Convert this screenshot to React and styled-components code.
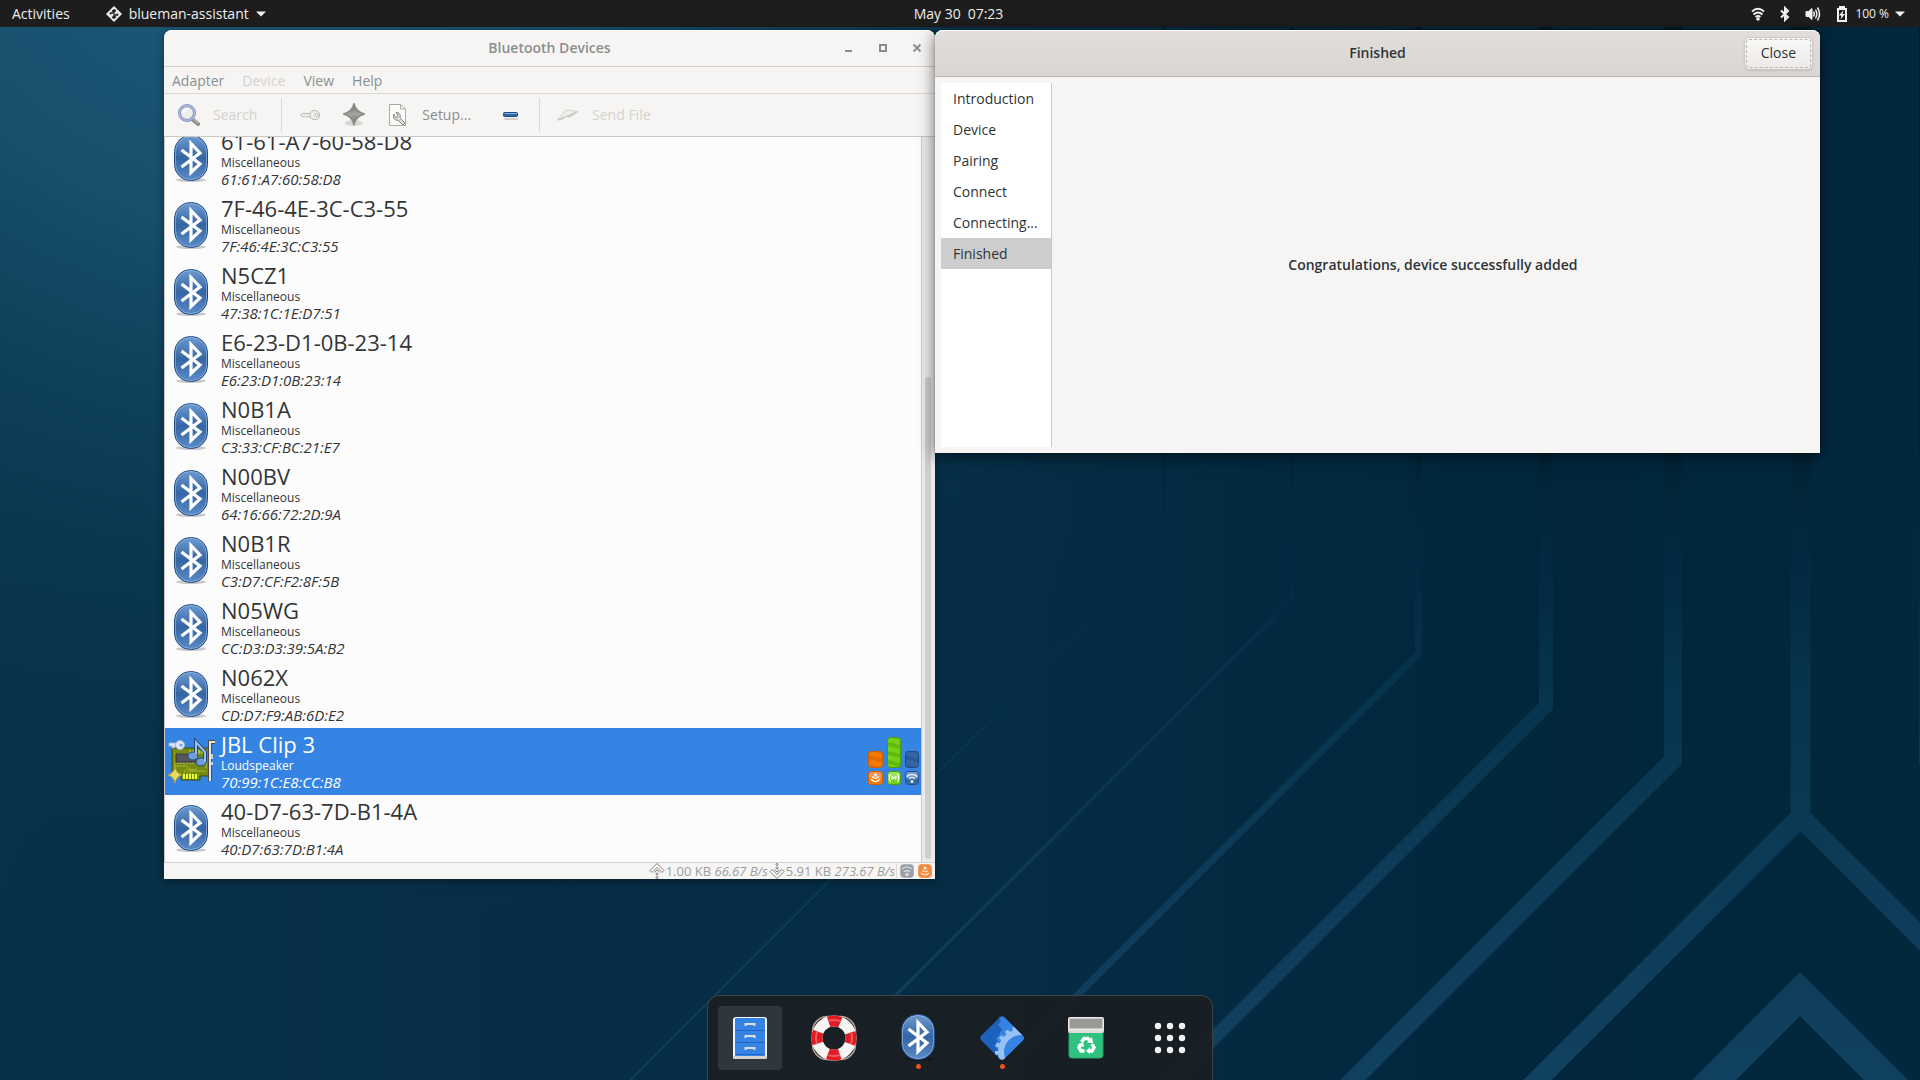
import React from 'react';
import styled, { createGlobalStyle } from 'styled-components';

const devices = [
  { name: '61-61-A7-60-58-D8', kind: 'Miscellaneous', address: '61:61:A7:60:58:D8' },
  { name: '7F-46-4E-3C-C3-55', kind: 'Miscellaneous', address: '7F:46:4E:3C:C3:55' },
  { name: 'N5CZ1', kind: 'Miscellaneous', address: '47:38:1C:1E:D7:51' },
  { name: 'E6-23-D1-0B-23-14', kind: 'Miscellaneous', address: 'E6:23:D1:0B:23:14' },
  { name: 'N0B1A', kind: 'Miscellaneous', address: 'C3:33:CF:BC:21:E7' },
  { name: 'N00BV', kind: 'Miscellaneous', address: '64:16:66:72:2D:9A' },
  { name: 'N0B1R', kind: 'Miscellaneous', address: 'C3:D7:CF:F2:8F:5B' },
  { name: 'N05WG', kind: 'Miscellaneous', address: 'CC:D3:D3:39:5A:B2' },
  { name: 'N062X', kind: 'Miscellaneous', address: 'CD:D7:F9:AB:6D:E2' },
  { name: 'JBL Clip 3', kind: 'Loudspeaker', address: '70:99:1C:E8:CC:B8', selected: true },
  { name: '40-D7-63-7D-B1-4A', kind: 'Miscellaneous', address: '40:D7:63:7D:B1:4A' },
];

const steps = ['Introduction', 'Device', 'Pairing', 'Connect', 'Connecting...', 'Finished'];

const Wallpaper = () => (
  <Backdrop viewBox="0 0 1920 1080" preserveAspectRatio="xMidYMid slice" aria-hidden="true">
    <defs>
      <linearGradient id="trace" gradientUnits="userSpaceOnUse" x1="0" y1="0" x2="0" y2="1080">
        <stop offset="0" stopColor="#03161f" stopOpacity="0.8" />
        <stop offset="0.42" stopColor="#03202f" stopOpacity="0.65" />
        <stop offset="0.52" stopColor="#022c45" stopOpacity="0.5" />
        <stop offset="0.62" stopColor="#06334c" />
        <stop offset="0.8" stopColor="#0b3b57" />
        <stop offset="1" stopColor="#114160" />
      </linearGradient>
      <radialGradient id="glow" gradientUnits="userSpaceOnUse" cx="260" cy="-160" r="1100">
        <stop offset="0" stopColor="#215f80" />
        <stop offset="0.35" stopColor="#1a5472" stopOpacity="0.85" />
        <stop offset="0.65" stopColor="#0d4059" stopOpacity="0.5" />
        <stop offset="1" stopColor="#07304a" stopOpacity="0" />
      </radialGradient>
      <linearGradient id="night" x1="0" y1="0" x2="1" y2="0">
        <stop offset="0" stopColor="#073049" />
        <stop offset="0.5" stopColor="#052d45" />
        <stop offset="0.82" stopColor="#01263c" />
        <stop offset="1" stopColor="#02283e" />
      </linearGradient>
      <linearGradient id="btFill" x1="0" y1="0" x2="0" y2="1">
        <stop offset="0" stopColor="#6e9bd0" />
        <stop offset="0.5" stopColor="#3465a4" />
        <stop offset="1" stopColor="#5c8cc6" />
      </linearGradient>
      <linearGradient id="starFill" x1="0" y1="0" x2="0" y2="1">
        <stop offset="0" stopColor="#6f6f6c" />
        <stop offset="0.5" stopColor="#a4a4a1" />
        <stop offset="1" stopColor="#70706e" />
      </linearGradient>
      <pattern id="stripeOrange" width="14" height="9" patternUnits="userSpaceOnUse" patternTransform="skewY(14)">
        <rect width="14" height="9" fill="#f57900" />
        <rect width="14" height="4" fill="#e06c00" />
      </pattern>
      <pattern id="stripeGreen" width="14" height="9" patternUnits="userSpaceOnUse" patternTransform="skewY(14)">
        <rect width="14" height="9" fill="#73d216" />
        <rect width="14" height="4" fill="#61b80e" />
      </pattern>
      <pattern id="stripeBlue" width="14" height="9" patternUnits="userSpaceOnUse" patternTransform="skewY(14)">
        <rect width="14" height="9" fill="#3465a4" />
        <rect width="14" height="4" fill="#2a5a9a" />
      </pattern>
    </defs>
    <rect width="1920" height="1080" fill="url(#night)" />
    <rect width="1920" height="1080" fill="url(#glow)" />
    <g fill="none" stroke="url(#trace)">
      <path d="M1163.500 0V547L630 1080.500" strokeWidth="1.500" />
      <path d="M1291 0V600L811 1080" strokeWidth="3" />
      <path d="M1418.500 0V654L992 1080.500" strokeWidth="7" />
      <path d="M1546 0V706L1172 1080" strokeWidth="14" />
      <path d="M1673 0V760L1343 1090" strokeWidth="18" />
      <path d="M1800.500 0V817L1530 1087.500M1800.500 817L1930 946.500" strokeWidth="20" />
      <path d="M1928 0V765" strokeWidth="18" />
      <path d="M1680 1114L1800 994L1930 1124" strokeWidth="31" />
    </g>
  </Backdrop>
);

const BluetoothBadge = () => (
  <svg width="34" height="48" viewBox="0 0 34 48">
    <ellipse cx="17" cy="45" rx="15" ry="2" fill="#000" opacity="0.2" />
    <rect x="0.500" y="0.500" width="33" height="45" rx="16" fill="url(#btFill)" stroke="#204a87" />
    <rect x="1.500" y="1.500" width="31" height="43" rx="15" fill="none" stroke="#9fbfe6" strokeOpacity="0.6" />
    <path d="M7.500 15L26 29L17 37.500V8.500L26 18L7.500 32" fill="none" stroke="#fff" strokeWidth="3.200" />
  </svg>
);

const SoundCard = () => (
  <svg width="48" height="48" viewBox="0 0 48 48">
    <path d="M5 10H42V38H33V42H14V38H5Z" fill="#758a12" stroke="#3f4f08" />
    <path d="M8 14V36H14M8 28H20L24 33H39M30 14H39V30" fill="none" stroke="#a5b52c" />
    <path d="M23 12V16M26 12V16M29 12V16M32 12V16M35 12V16" stroke="#d8e04a" />
    <path d="M17 36V41M20 36V41M23 36V41M26 36V41M29 36V41" stroke="#e8ff2a" strokeWidth="2" />
    <path d="M17 36Q17 31 22 31M20 36Q20 32 26 31M23 36Q23 32 30 31" fill="none" stroke="#a5b52c" />
    <path d="M11 15V26M14 15V26M17 15V26M20 15V26M23 15V26M26 15V26" stroke="#c8c8c4" />
    <rect x="9" y="16" width="20" height="8" fill="#55575a" stroke="#2e3436" />
    <path d="M48 4H43V43" fill="none" stroke="#4b4b49" strokeWidth="4" />
    <path d="M48 4H43V43" fill="none" stroke="#e8e4df" strokeWidth="2" />
    <path d="M45 16V21M45 24V27" stroke="#d3d0ca" strokeWidth="2" />
    <path d="M29 16V4L38 14V24" fill="none" stroke="#1f4a87" strokeWidth="4" />
    <ellipse cx="26" cy="18" rx="5" ry="4" fill="#6f9fdb" stroke="#1f4a87" />
    <ellipse cx="34" cy="24" rx="5" ry="4" fill="#6f9fdb" stroke="#1f4a87" />
    <path d="M29 16V4L38 14V24" fill="none" stroke="#9cc0ec" strokeWidth="2" />
    <path d="M2 5H10V9H7V10H5V8H2Z" fill="#dbe7f5" stroke="#9db8d6" />
    <circle cx="13" cy="7" r="4.500" fill="#dbe7f5" stroke="#9db8d6" />
    <circle cx="14" cy="7" r="1.500" fill="#6a9bd8" />
    <path d="M8 29Q9 35 15 37Q9 39 8 45Q7 39 1 37Q7 35 8 29Z" fill="#ead866" stroke="#b3a02e" />
  </svg>
);

const SignalBars = () => (
  <svg width="52" height="50" viewBox="0 0 52 50" fill="none">
    <rect x="0.500" y="14.500" width="14" height="16" rx="3" fill="url(#stripeOrange)" stroke="#ce5c00" />
    <rect x="19.500" y="0.500" width="13" height="30" rx="3" fill="url(#stripeGreen)" stroke="#4e9a06" />
    <rect x="37.500" y="14.500" width="13" height="16" rx="3" fill="url(#stripeBlue)" stroke="#204a87" />
    <rect x="0.500" y="34.500" width="14" height="13" rx="3" fill="#f8924a" stroke="#ce5c00" />
    <rect x="1" y="41" width="13" height="6" rx="2" fill="#f57900" />
    <rect x="19.500" y="34.500" width="13" height="13" rx="3" fill="#9be05c" stroke="#4e9a06" />
    <rect x="20" y="41" width="12" height="6" rx="2" fill="#73d216" />
    <rect x="37.500" y="34.500" width="13" height="13" rx="3" fill="#7c9fce" stroke="#204a87" />
    <rect x="38" y="41" width="12" height="6" rx="2" fill="#3465a4" />
    <g stroke="#fff" strokeWidth="1.200">
      <path d="M3 42Q7.500 47 12 42M4 39.500Q7.500 43 11 39.500" />
      <path d="M22.500 37Q20 41 22.500 45M29.500 37Q32 41 29.500 45M24.500 39Q23 41 24.500 43M27.500 39Q29 41 27.500 43" />
      <path d="M39 39.500Q44 35.500 49 39.500M41 42Q44 39.500 47 42" />
    </g>
    <circle cx="7.500" cy="38" r="1.500" fill="#fff" />
    <circle cx="26" cy="41" r="1" fill="#fff" />
    <circle cx="44" cy="44.500" r="1.500" fill="#fff" />
  </svg>
);

const SearchIcon = () => (
  <svg width="22" height="22" viewBox="0 0 22 22">
    <path d="M14 15L20 20" stroke="#8d8d8a" strokeWidth="4" strokeLinecap="round" />
    <path d="M15 15L20 19" stroke="#c9c9c6" strokeLinecap="round" />
    <circle cx="9" cy="9" r="7.500" fill="#eeeeec" stroke="#7f8fbc" strokeWidth="3" />
    <circle cx="9" cy="9" r="7.500" fill="none" stroke="#aebbe0" strokeWidth="1.500" />
    <path d="M5 9Q6 5 10 5" fill="none" stroke="#fff" strokeWidth="2" />
  </svg>
);

const KeyIcon = () => (
  <svg width="22" height="22" viewBox="0 0 22 22" fill="#eeeeec" stroke="#b9b9b5">
    <path d="M11 9.500H3L1.500 11.500L4 13L5.500 12L7 13.500L8.500 12L10 13H11.500" />
    <path d="M16 6.500C19 6.500 20.500 8.500 20.500 11S19 15.500 16 15.500S11 14 11 11S13 6.500 16 6.500Z" />
    <circle cx="17.500" cy="11" r="1.500" fill="#fff" />
  </svg>
);

const StarIcon = () => (
  <svg width="22" height="24" viewBox="0 0 22 24">
    <ellipse cx="11" cy="20" rx="9" ry="3" fill="#000" opacity="0.12" />
    <path
      d="M11 0.500Q12.500 8.500 21.500 11Q12.500 13.500 11 21.500Q9.500 13.500 0.500 11Q9.500 8.500 11 0.500Z"
      fill="url(#starFill)"
      stroke="#8b8b88"
      strokeWidth="1.500"
      strokeLinejoin="round"
    />
  </svg>
);

const SetupIcon = () => (
  <svg width="22" height="24" viewBox="0 0 22 24" fill="none">
    <path d="M2.500 1.500H13.500L18.500 6V22.500H2.500Z" fill="#fbfbfa" stroke="#a9aba7" />
    <path d="M13.500 1.500V6H18.500" stroke="#a9aba7" />
    <path d="M7 11C5.500 15 8 18 11 17L16 22L18 20L13 15C14 12 12 9 9 9.500L11 12L10.500 14L8.500 14.500Z" fill="#deded9" stroke="#858783" />
  </svg>
);

const MinusIcon = () => (
  <svg width="22" height="22" viewBox="0 0 22 22">
    <rect x="4" y="14" width="14" height="2" rx="1" fill="#000" opacity="0.15" />
    <rect x="3.500" y="8.500" width="14" height="4" rx="1" fill="#3465a4" stroke="#204a87" />
    <path d="M5 9.500H17" stroke="#8aaedb" />
  </svg>
);

const PlaneIcon = () => (
  <svg width="22" height="22" viewBox="0 0 22 22" strokeLinejoin="round">
    <path d="M0.500 16L9 6L21 7.500Z" fill="#efefed" stroke="#d0d0cd" />
    <path d="M0.500 16L21 7.500L13 13L9 12L7 14.500Z" fill="#cfcfcc" stroke="#cacac7" />
  </svg>
);

const TrafficIcon = ({ down }) => (
  <svg width="16" height="16" viewBox="0 0 16 16" fill="none" stroke="#7d7f7b">
    <g transform={down ? 'rotate(180 8 8)' : undefined}>
      <path d="M8 0.500L15 7.500L13 9.500L8 4.500L3 9.500L1 7.500Z" fill="#fafafa" />
      <path d="M5.500 9.500L8 7L10.500 9.500" />
      <circle cx="8" cy="11" r="1" />
      <circle cx="8" cy="14.500" r="1" />
    </g>
  </svg>
);

const StatusBadge = ({ sending }) => (
  <svg width="14" height="14" viewBox="0 0 14 14" fill="none">
    <rect x="0.500" y="0.500" width="13" height="13" rx="3" fill={sending ? '#f3893c' : '#9a9ea6'} stroke={sending ? '#ee9d60' : '#b0b3b9'} />
    {sending ? (
      <g>
        <path d="M3 9Q7 12.500 11 9M4 6.500Q7 9 10 6.500" stroke="#fde3cd" strokeWidth="1.200" />
        <circle cx="7" cy="4" r="1.500" fill="#fff" />
      </g>
    ) : (
      <g>
        <path d="M2 5Q7 1 12 5M4 8Q7 5 10 8" stroke="#dfe0e3" strokeWidth="1.200" />
        <circle cx="7" cy="10.500" r="1.500" fill="#e6e7e9" />
      </g>
    )}
  </svg>
);

const AppMark = () => (
  <svg width="16" height="16" viewBox="0 0 16 16">
    <path d="M8 0L16 8L8 16L0 8Z" fill="#eeeeec" />
    <path d="M4.500 8.500V7H8V5M6 5.500L8 4L10 5M11.500 7.500V9H8V11M10 10.500L8 12L6 11" fill="none" stroke="#1d1d1d" strokeWidth="1.500" />
  </svg>
);

const Caret = () => (
  <svg width="10" height="6" viewBox="0 0 10 6">
    <path d="M0 0.500H10L5 5.500Z" fill="#f2f2f2" />
  </svg>
);

const WifiIcon = () => (
  <svg width="14" height="16" viewBox="0 0 14 16" fill="none" stroke="#f2f2f2" strokeWidth="1.800">
    <path d="M1 5.500Q7 0 13 5.500M2.500 8.500Q7 4.500 11.500 8.500M4.500 11Q7 9 9.500 11" />
    <circle cx="7" cy="13" r="1.800" fill="#f2f2f2" stroke="none" />
  </svg>
);

const TrayBluetooth = () => (
  <svg width="10" height="16" viewBox="0 0 10 16" fill="none" stroke="#f2f2f2" strokeWidth="2">
    <path d="M1 4.500L8 11L5 14V2L8 5L1 11.500" />
  </svg>
);

const VolumeIcon = () => (
  <svg width="16" height="16" viewBox="0 0 16 16" fill="none" stroke="#f2f2f2" strokeWidth="1.500">
    <path d="M1 5.500H3.500L7 2.500V13.500L3.500 10.500H1Z" fill="#f2f2f2" strokeWidth="1" />
    <path d="M8.500 5.500Q10 8 8.500 10.500M10.500 3.500Q13 8 10.500 12.500M12.500 1.500Q16.500 8 12.500 14.500" />
  </svg>
);

const BatteryIcon = () => (
  <svg width="12" height="16" viewBox="0 0 12 16">
    <path d="M3 0H9V2H11V16H1V2H3Z" fill="#f2f2f2" />
    <path d="M3 4H9V14H3Z" fill="#1d1d1d" />
    <path d="M7.500 4L3 9.500H5.500L4.500 13.500L9 8H6.500Z" fill="#f2f2f2" />
  </svg>
);

const FilesIcon = () => (
  <svg width="46" height="46" viewBox="0 0 46 46">
    <rect x="6" y="2" width="34" height="42" rx="3" fill="#f6f5f4" />
    <rect x="6" y="41" width="34" height="3" rx="1" fill="#d5d0ce" />
    <rect x="8" y="3" width="30" height="38" rx="1" fill="#3584e4" />
    <path d="M8 15.500H38M8 27.500H38M8 39.500H38" stroke="#1f66c7" />
    <path d="M18.500 11V9H27.500V11M18.500 23V21H27.500V23M18.500 35V33H27.500V35" fill="none" stroke="#deddda" strokeWidth="2" />
  </svg>
);

const HelpIcon = () => (
  <svg width="46" height="46" viewBox="0 0 46 46" fill="none">
    <rect x="1.500" y="1.500" width="43" height="43" rx="15" stroke="#b5a495" strokeWidth="1.500" />
    <circle cx="23" cy="23" r="17" stroke="#f6f5f4" strokeWidth="11" />
    <circle cx="23" cy="23" r="17" stroke="#e01b24" strokeWidth="11" strokeDasharray="12 14.700" strokeDashoffset="6" />
    <circle cx="23" cy="23" r="18" stroke="#ed5a62" strokeWidth="2" strokeDasharray="12.700 15.570" strokeDashoffset="6.350" />
  </svg>
);

const BlueGearIcon = () => (
  <svg width="46" height="46" viewBox="0 0 46 46">
    <defs>
      <clipPath id="diamond">
        <path d="M23 1.500Q24.500 1.500 25.500 2.500L43.500 20.500Q46 23 43.500 25.500L25.500 43.500Q23 46 20.500 43.500L2.500 25.500Q0 23 2.500 20.500L20.500 2.500Q21.500 1.500 23 1.500Z" />
      </clipPath>
    </defs>
    <g clipPath="url(#diamond)" fill="none">
      <rect width="46" height="46" fill="#1c62bd" />
      <path d="M18 0L22 6L19 10L23 14L20 20L17 24L20 28L15 30L18 34L46 46V0Z" fill="#3584e4" />
      <circle cx="42" cy="37" r="24" stroke="#99c1f1" strokeWidth="4" strokeDasharray="4 4" />
      <circle cx="42" cy="37" r="20" fill="#3584e4" stroke="#99c1f1" strokeWidth="6" />
    </g>
  </svg>
);

const TrashIcon = () => (
  <svg width="46" height="46" viewBox="0 0 46 46">
    <path d="M6 14H40V40Q40 43 37 43H9Q6 43 6 40Z" fill="#2ec27e" stroke="#27a56b" />
    <rect x="5" y="2" width="36" height="16" rx="2" fill="#deddda" />
    <rect x="6" y="3" width="34" height="11" rx="1" fill="#9a9996" stroke="#f6f5f4" />
    <g fill="none" stroke="#fff" strokeWidth="3.500">
      <path d="M18.500 27L21 23.500H25L27 26" />
      <path d="M29 29L31 32.500L29 36H26" />
      <path d="M21.500 36H18L16 32.500L18 29" />
    </g>
    <path d="M24 28L30 28L29 22ZM27 32V39L23 36ZM14 30L20 27L21 32Z" fill="#fff" />
  </svg>
);

const GridIcon = () => (
  <svg width="46" height="46" viewBox="0 0 46 46" fill="#f2f2f2">
    {[11, 23, 35].map(y => [11, 23, 35].map(x => <circle key={`${x}-${y}`} cx={x} cy={y} r="3.200" />))}
  </svg>
);

const launchers = [
  { label: 'Files', icon: <FilesIcon />, active: true },
  { label: 'Help', icon: <HelpIcon /> },
  { label: 'Bluetooth Manager', icon: <BluetoothBadge />, running: true },
  { label: 'blueman-assistant', icon: <BlueGearIcon />, running: true },
  { label: 'Trash', icon: <TrashIcon /> },
  { label: 'Show Applications', icon: <GridIcon /> },
];

const DeviceManager = () => (
  <ManagerWindow aria-label="Bluetooth Devices">
    <TitleBar>
      <WindowTitle>Bluetooth Devices</WindowTitle>
      <WindowButtons>
        <WindowButton aria-label="Minimize">
          <svg width="10" height="10" viewBox="0 0 10 10"><path d="M1 8H8" stroke="#8b8e8f" strokeWidth="2" /></svg>
        </WindowButton>
        <WindowButton aria-label="Maximize">
          <svg width="10" height="10" viewBox="0 0 10 10"><path d="M2 2H8V8H2Z" fill="none" stroke="#8b8e8f" strokeWidth="2" /></svg>
        </WindowButton>
        <WindowButton aria-label="Close window">
          <svg width="10" height="10" viewBox="0 0 10 10"><path d="M1.500 1.500L8.500 8.500M8.500 1.500L1.500 8.500" stroke="#8b8e8f" strokeWidth="2" /></svg>
        </WindowButton>
      </WindowButtons>
    </TitleBar>
    <MenuBar>
      <MenuItem>Adapter</MenuItem>
      <MenuItem disabled>Device</MenuItem>
      <MenuItem>View</MenuItem>
      <MenuItem>Help</MenuItem>
    </MenuBar>
    <Toolbar>
      <ToolButton $labelled disabled><SearchIcon />Search</ToolButton>
      <Separator />
      <ToolButton aria-label="Pair" disabled><KeyIcon /></ToolButton>
      <ToolButton aria-label="Trust"><StarIcon /></ToolButton>
      <ToolButton $labelled><SetupIcon />Setup...</ToolButton>
      <ToolButton aria-label="Remove"><MinusIcon /></ToolButton>
      <Separator />
      <ToolButton $labelled disabled><PlaneIcon />Send File</ToolButton>
    </Toolbar>
    <ListArea>
      <DeviceList>
        {devices.map(d => (
          <DeviceRow key={d.address} $selected={d.selected}>
            <DeviceIcon>{d.selected ? <SoundCard /> : <BluetoothBadge />}</DeviceIcon>
            <DeviceText>
              <DeviceName>{d.name}</DeviceName>
              <DeviceKind>{d.kind}</DeviceKind>
              <DeviceAddress>{d.address}</DeviceAddress>
            </DeviceText>
            {d.selected && <SignalBars />}
          </DeviceRow>
        ))}
      </DeviceList>
      <ScrollTrack>
        <ScrollThumb />
      </ScrollTrack>
    </ListArea>
    <StatusBar>
      <TrafficIcon />
      <Traffic>1.00 KB <em>66.67 B/s</em></Traffic>
      <TrafficIcon down />
      <Traffic>5.91 KB <em>273.67 B/s</em></Traffic>
      <StatusIcons>
        <StatusBadge />
        <StatusBadge sending />
      </StatusIcons>
    </StatusBar>
  </ManagerWindow>
);

const Assistant = () => (
  <AssistantWindow aria-label="Finished">
    <HeaderBar>
      <WindowTitle>Finished</WindowTitle>
      <CloseButton>Close</CloseButton>
    </HeaderBar>
    <AssistantBody>
      <Steps>
        {steps.map(s => (
          <Step key={s} $current={s === 'Finished'}>{s}</Step>
        ))}
      </Steps>
      <Message>Congratulations, device successfully added</Message>
    </AssistantBody>
  </AssistantWindow>
);

export default () => (
  <Desktop>
    <GlobalStyle />
    <Wallpaper />
    <TopBar>
      <TopLeft>
        <PanelButton>Activities</PanelButton>
        <PanelButton><AppMark />blueman-assistant<Caret /></PanelButton>
      </TopLeft>
      <PanelButton>May 30&ensp;07:23</PanelButton>
      <Tray aria-label="System">
        <WifiIcon />
        <TrayBluetooth />
        <VolumeIcon />
        <Battery><BatteryIcon />100 %</Battery>
        <Caret />
      </Tray>
    </TopBar>
    <Workspace>
      <DeviceManager />
      <Assistant />
    </Workspace>
    <Dock>
      {launchers.map(l => (
        <Launcher key={l.label} aria-label={l.label} $active={l.active} $running={l.running}>
          {l.icon}
        </Launcher>
      ))}
    </Dock>
  </Desktop>
);

const GlobalStyle = createGlobalStyle`
  * {
    box-sizing: border-box;
  }
  body {
    margin: 0;
    font-family: 'Open Sans', 'Noto Sans', sans-serif;
    font-size: 14px;
    line-height: 20px;
    color: #2e3436;
  }
  button {
    font: inherit;
    color: inherit;
    background: none;
    border: 0;
    margin: 0;
    padding: 0;
  }
  svg {
    flex: none;
    display: block;
  }
`;

const Desktop = styled.div`
  position: relative;
  display: flex;
  flex-direction: column;
  height: 100vh;
  overflow: hidden;
  background: #052d45;
`;

const Backdrop = styled.svg`
  position: absolute;
  inset: 0;
  width: 100%;
  height: 100%;
`;

const TopBar = styled.header`
  position: relative;
  display: grid;
  grid-template-columns: 1fr auto 1fr;
  align-items: center;
  height: 27px;
  padding: 0 15px 0 12px;
  background: #1d1d1d;
  color: #eeeeec;
`;

const TopLeft = styled.div`
  display: flex;
  gap: 36px;
`;

const PanelButton = styled.button`
  display: flex;
  align-items: center;
  gap: 7px;
`;

const Tray = styled.button`
  display: flex;
  align-items: center;
  justify-self: end;
  gap: 15px;
  font-size: 12px;

  > :last-child {
    margin-left: -9px;
  }
`;

const Battery = styled.span`
  display: flex;
  align-items: center;
  gap: 7px;
`;

const Workspace = styled.main`
  position: relative;
  flex: 1;
  min-height: 0;
  display: flex;
  align-items: flex-start;
  padding: 3px 100px 116px 164px;
`;

const ManagerWindow = styled.section`
  flex: 771;
  align-self: stretch;
  min-width: 0;
  display: flex;
  flex-direction: column;
  background: #f6f5f4;
  border-radius: 8px 8px 0 0;
  box-shadow: 0 2px 8px rgba(0, 0, 0, 0.4);
  color: #8b8e8f;
`;

const AssistantWindow = styled.section`
  position: relative;
  flex: 885;
  min-width: 0;
  background: #f6f5f4;
  border-radius: 8px 8px 0 0;
  box-shadow: 0 3px 16px rgba(0, 0, 0, 0.6), 0 0 1px rgba(0, 0, 0, 0.6);
`;

const TitleBar = styled.div`
  display: grid;
  grid-template-columns: 1fr auto 1fr;
  align-items: center;
  height: 37px;
  padding: 0 13px;
  border-bottom: 1px solid #d2ceca;
  box-shadow: inset 0 1px #fff;
  border-radius: 8px 8px 0 0;
`;

const WindowTitle = styled.h1`
  grid-column: 2;
  margin: 0;
  font-size: 14px;
  font-weight: 600;
`;

const WindowButtons = styled.div`
  justify-self: end;
  display: flex;
  gap: 24px;
`;

const WindowButton = styled.button`
  display: flex;
`;

const MenuBar = styled.nav`
  display: flex;
  gap: 18px;
  height: 27px;
  padding: 1px 8px 0;
  border-bottom: 1px solid #dcd9d6;
`;

const MenuItem = styled.button`
  &:disabled {
    color: #d3d2cf;
  }
`;

const Toolbar = styled.div`
  display: flex;
  align-items: center;
  height: 43px;
  padding: 0 3px;
  border-bottom: 1px solid #cdc7c2;
`;

const ToolButton = styled.button`
  display: flex;
  align-items: center;
  gap: 13px;
  padding: 0 ${p => (p.$labelled ? 18 : 11)}px 0 11px;

  &:disabled {
    color: #d3d2cf;
  }
`;

const Separator = styled.span`
  width: 1px;
  height: 34px;
  margin: 0 6px;
  background: #dad7d4;
`;

const ListArea = styled.div`
  flex: 1;
  min-height: 0;
  display: flex;
  border-left: 1px solid #cdc7c2;
`;

const DeviceList = styled.ul`
  flex: 1;
  display: flex;
  flex-direction: column;
  justify-content: flex-end;
  overflow: hidden;
  margin: 0;
  padding: 0;
  list-style: none;
  background: #fcfcfc;
`;

const DeviceRow = styled.li`
  flex: none;
  display: flex;
  align-items: flex-start;
  height: 67px;
  padding-right: 1px;
  background: ${p => (p.$selected ? '#3584e4' : 'transparent')};
  color: ${p => (p.$selected ? '#fff' : '#333536')};

  > :last-child {
    margin-top: ${p => (p.$selected ? 9 : 0)}px;
  }
`;

const DeviceIcon = styled.span`
  display: flex;
  justify-content: center;
  width: 51px;
  padding-top: 10px;
`;

const DeviceText = styled.div`
  flex: 1;
  padding: 2px 5px;
`;

const DeviceName = styled.div`
  font-size: 22px;
  line-height: 28px;
`;

const DeviceKind = styled.div`
  font-size: 12px;
  line-height: 16px;
`;

const DeviceAddress = styled.div`
  font-size: 15px;
  font-style: italic;
  line-height: 17px;
`;

const ScrollTrack = styled.div`
  display: flex;
  flex-direction: column;
  justify-content: flex-end;
  width: 14px;
  padding: 3px;
  background: #ebeae9;
  border-left: 1px solid #cdc7c2;
`;

const ScrollThumb = styled.div`
  width: 6px;
  height: 67%;
  border-radius: 3px;
  background: #cecece;
`;

const StatusBar = styled.footer`
  display: flex;
  align-items: center;
  justify-content: flex-end;
  height: 17px;
  padding-right: 3px;
  border-top: 1px solid #d5d0cc;
  font-size: 13px;
  line-height: 16px;
  color: #9b9d9d;
`;

const Traffic = styled.span`
  padding: 0 1px;
`;

const StatusIcons = styled.span`
  display: flex;
  gap: 4px;
  padding-left: 3px;
  border-left: 1px solid #dcd9d6;
`;

const HeaderBar = styled.div`
  display: grid;
  grid-template-columns: 1fr auto 1fr;
  align-items: center;
  height: 47px;
  padding: 0 7px;
  background: linear-gradient(#e1dedb, #dad6d2);
  border-bottom: 1px solid #bfb8b1;
  border-radius: 8px 8px 0 0;
  box-shadow: inset 0 1px #faf9f8;
`;

const CloseButton = styled.button`
  justify-self: end;
  height: 33px;
  padding: 0 16px;
  background: linear-gradient(#f8f8f7, #edebe9);
  border: 1px solid #cdc7c2;
  border-radius: 5px;
  outline: 1px dashed #b5b5b3;
  outline-offset: -3px;
  box-shadow: 0 1px 2px rgba(0, 0, 0, 0.1);
`;

const AssistantBody = styled.div`
  display: flex;
  min-height: 376px;
  padding: 6px;
`;

const Steps = styled.ol`
  margin: 0;
  padding: 0;
  list-style: none;
  background: #fff;
  border-right: 1px solid #cdc7c2;
`;

const Step = styled.li`
  padding: 0 13px 0 12px;
  line-height: 31px;
  background: ${p => (p.$current ? '#cdcdcd' : 'transparent')};
`;

const Message = styled.p`
  flex: 1;
  align-self: center;
  margin: 0;
  text-align: center;
  font-weight: 600;
`;

const Dock = styled.nav`
  position: relative;
  align-self: center;
  display: flex;
  gap: 20px;
  height: 85px;
  padding: 10px;
  background: rgba(27, 30, 33, 0.9);
  border: 1px solid #3b4246;
  border-bottom: 0;
  border-radius: 12px 12px 0 0;
`;

const Launcher = styled.button`
  position: relative;
  display: flex;
  align-items: center;
  justify-content: center;
  width: 64px;
  height: 64px;
  border-radius: 4px;
  background: ${p => (p.$active ? '#2f363d' : 'transparent')};

  &::after {
    content: '';
    display: ${p => (p.$running ? 'block' : 'none')};
    position: absolute;
    bottom: 1px;
    width: 5px;
    height: 5px;
    border-radius: 50%;
    background: #e95420;
  }
`;
